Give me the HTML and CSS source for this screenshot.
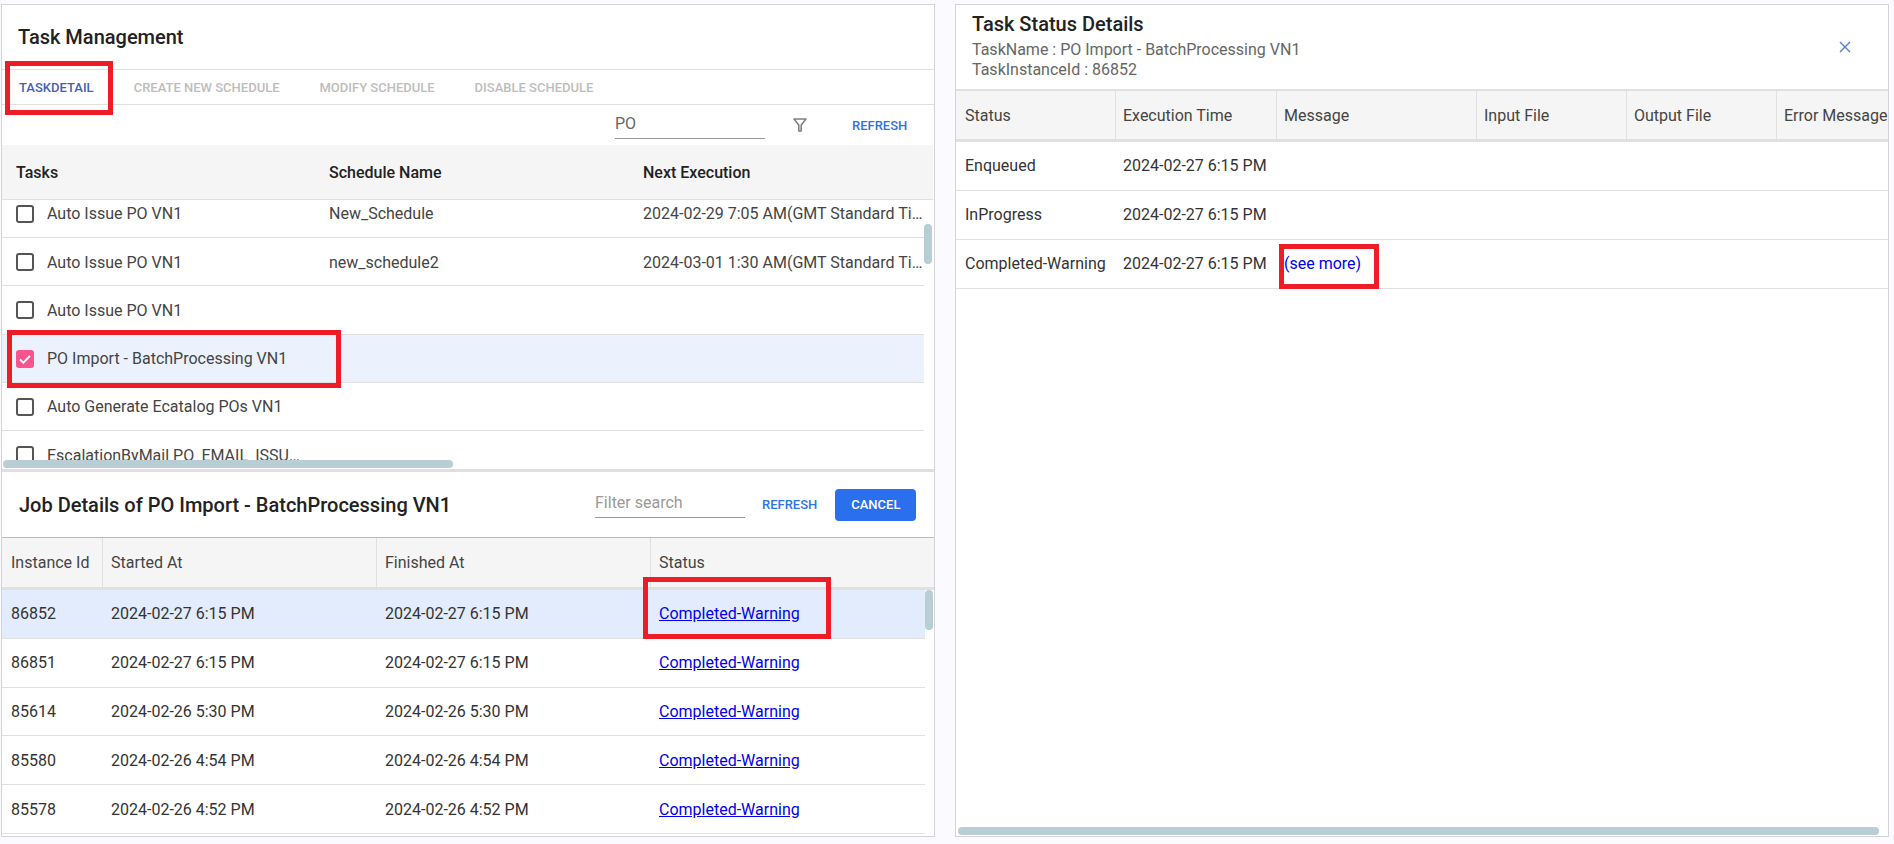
FILE: index.html
```html
<!DOCTYPE html>
<html lang="en">
<head>
    <meta charset="UTF-8">
    <meta name="viewport" content="width=device-width, initial-scale=1.0">
    <title>Task Management</title>
    <link rel="stylesheet" href="styles.css">
</head>
<body>
    <div class="page">
        <section class="panel left-panel">
            <div class="tasks-part">
                <h2 class="main-title">Task Management</h2>
                <nav class="tabs">
                    <a class="tab tab-first active">TASKDETAIL</a>
                    <a class="tab">CREATE NEW SCHEDULE</a>
                    <a class="tab">MODIFY SCHEDULE</a>
                    <a class="tab">DISABLE SCHEDULE</a>
                </nav>
                <div class="tools">
                    <div class="field field-po">PO</div>
                    <svg class="filter-icon" viewBox="0 0 14 14" width="14" height="14">
                        <path d="M1 1h12L8.2 7v6H5.8V7z" fill="none" stroke="#808080" stroke-width="1.6" stroke-linejoin="round"/>
                    </svg>
                    <a class="link-btn">REFRESH</a>
                </div>
                <div class="task-grid task-head">
                    <div>Tasks</div>
                    <div>Schedule Name</div>
                    <div>Next Execution</div>
                </div>
                <div class="task-list">
                    <div class="task-grid task-row first-row">
                        <div class="task-name"><span class="check"></span><span class="name">Auto Issue PO VN1</span></div>
                        <div>New_Schedule</div>
                        <div class="cut">2024-02-29 7:05 AM(GMT Standard Time)</div>
                    </div>
                    <div class="task-grid task-row">
                        <div class="task-name"><span class="check"></span><span class="name">Auto Issue PO VN1</span></div>
                        <div>new_schedule2</div>
                        <div class="cut">2024-03-01 1:30 AM(GMT Standard Time)</div>
                    </div>
                    <div class="task-grid task-row">
                        <div class="task-name"><span class="check"></span><span class="name">Auto Issue PO VN1</span></div>
                        <div></div>
                        <div></div>
                    </div>
                    <div class="task-grid task-row selected">
                        <div class="task-name">
                            <span class="check checked">
                                <svg viewBox="0 0 18 18" width="18" height="18"><path d="M4 9.5l3.4 3.2L14 5.8" fill="none" stroke="#fff" stroke-width="1.8"/></svg>
                            </span>
                            <span class="name">PO Import - BatchProcessing VN1</span>
                        </div>
                        <div></div>
                        <div></div>
                    </div>
                    <div class="task-grid task-row">
                        <div class="task-name"><span class="check"></span><span class="name">Auto Generate Ecatalog POs VN1</span></div>
                        <div></div>
                        <div></div>
                    </div>
                    <div class="task-grid task-row">
                        <div class="task-name"><span class="check"></span><span class="name">EscalationByMail PO_EMAIL_ISSUE VN1</span></div>
                        <div></div>
                        <div></div>
                    </div>
                    <div class="thumb thumb-h"></div>
                </div>
                <div class="thumb thumb-v tasks-thumb"></div>
            </div>

            <div class="jobs-part">
                <div class="job-bar">
                    <h2 class="job-title">Job Details of PO Import - BatchProcessing VN1</h2>
                    <div class="field field-search">Filter search</div>
                    <a class="link-btn">REFRESH</a>
                    <a class="cancel-btn">CANCEL</a>
                </div>
                <div class="job-grid job-head">
                    <div>Instance Id</div>
                    <div>Started At</div>
                    <div>Finished At</div>
                    <div>Status</div>
                </div>
                <div class="job-grid job-row current">
                    <div>86852</div>
                    <div>2024-02-27 6:15 PM</div>
                    <div>2024-02-27 6:15 PM</div>
                    <div><a class="status-link">Completed-Warning</a></div>
                </div>
                <div class="job-grid job-row">
                    <div>86851</div>
                    <div>2024-02-27 6:15 PM</div>
                    <div>2024-02-27 6:15 PM</div>
                    <div><a class="status-link">Completed-Warning</a></div>
                </div>
                <div class="job-grid job-row">
                    <div>85614</div>
                    <div>2024-02-26 5:30 PM</div>
                    <div>2024-02-26 5:30 PM</div>
                    <div><a class="status-link">Completed-Warning</a></div>
                </div>
                <div class="job-grid job-row">
                    <div>85580</div>
                    <div>2024-02-26 4:54 PM</div>
                    <div>2024-02-26 4:54 PM</div>
                    <div><a class="status-link">Completed-Warning</a></div>
                </div>
                <div class="job-grid job-row">
                    <div>85578</div>
                    <div>2024-02-26 4:52 PM</div>
                    <div>2024-02-26 4:52 PM</div>
                    <div><a class="status-link">Completed-Warning</a></div>
                </div>
                <div class="thumb thumb-v jobs-thumb"></div>
            </div>

            <div class="mark mark-tab"></div>
            <div class="mark mark-task"></div>
            <div class="mark mark-status"></div>
        </section>

        <section class="panel right-panel">
            <div class="detail-bar">
                <div>
                    <h2 class="detail-title">Task Status Details</h2>
                    <p class="detail-sub">TaskName : PO Import - BatchProcessing VN1</p>
                    <p class="detail-sub">TaskInstanceId : 86852</p>
                </div>
                <svg class="close-icon" viewBox="0 0 12 12" width="12" height="12">
                    <path d="M1 1l10 10M11 1L1 11" stroke="#4f7fd0" stroke-width="1.4"/>
                </svg>
            </div>
            <div class="detail-grid detail-head">
                <div>Status</div>
                <div>Execution Time</div>
                <div>Message</div>
                <div>Input File</div>
                <div>Output File</div>
                <div class="nowrap">Error Message</div>
            </div>
            <div class="detail-grid detail-row">
                <div>Enqueued</div>
                <div>2024-02-27 6:15 PM</div>
                <div></div><div></div><div></div><div></div>
            </div>
            <div class="detail-grid detail-row">
                <div>InProgress</div>
                <div>2024-02-27 6:15 PM</div>
                <div></div><div></div><div></div><div></div>
            </div>
            <div class="detail-grid detail-row">
                <div>Completed-Warning</div>
                <div>2024-02-27 6:15 PM</div>
                <div><a class="more-link">(see more)</a></div>
                <div></div><div></div><div></div>
            </div>
            <div class="thumb thumb-h detail-thumb"></div>
            <div class="mark mark-more"></div>
        </section>
    </div>
</body>
</html>
```

FILE: styles.css
```css
*{
    box-sizing: border-box;
    font-family: Roboto, "Liberation Sans", sans-serif;
}
body{
    margin: 0;
    background-color: #fbfbff;
    color: #333;
    font-size: 16px;
    height: 844px;
    overflow: hidden;
}
h2, p{
    margin: 0;
}
.page{
    display: flex;
    gap: 20px;
    padding: 4px 0 0 1px;
}
.panel{
    position: relative;
    background-color: white;
    border: 1px solid #d4d4d8;
    height: 833px;
}
.left-panel{
    width: 934px;
}
.right-panel{
    width: 934px;
}

/* top part */
.tasks-part{
    position: relative;
    height: 467px;
    border-bottom: 3px solid #e0e0e0;
}
.main-title{
    height: 64px;
    padding: 20px 0 0 16px;
    font-size: 20px;
    font-weight: 500;
    line-height: 24px;
    color: #222;
}
.tabs{
    display: flex;
    align-items: center;
    height: 36px;
    border-top: 1px solid #e0e0e0;
    border-bottom: 1px solid #e0e0e0;
    padding-left: 17px;
    gap: 40px;
    font-size: 13px;
    font-weight: 500;
    color: #bdbdbd;
}
.tab.active{
    color: #3f62b5;
}
.tools{
    display: flex;
    align-items: center;
    height: 40px;
    padding-left: 613px;
}
.field{
    width: 150px;
    height: 34px;
    border-bottom: 1px solid #999;
    color: #666;
    line-height: 22px;
}
.field-po{
    padding-top: 8px;
    margin-bottom: 6px;
}
.filter-icon{
    margin-left: 28px;
}
.link-btn{
    font-size: 13px;
    font-weight: 500;
    color: #2e72e8;
}
.tools .link-btn{
    margin-left: 45px;
}
.task-grid{
    display: grid;
    grid-template-columns: 326px 314px 282px;
    width: 922px;
}
.task-grid > div{
    padding-left: 14px;
    min-width: 0;
}
.task-grid > div + div{
    padding-left: 1px;
}
.task-head{
    height: 55px;
    align-items: center;
    background-color: #f5f5f5;
    border-bottom: 1px solid #e0e0e0;
    font-weight: 500;
    color: #222;
    width: 931px;
}
.task-list{
    position: relative;
    height: 269px;
    overflow: hidden;
}
.task-row{
    height: 48.25px;
    padding-top: 1px;
    align-items: center;
    border-bottom: 1px solid #e0e0e0;
    color: #444;
}
.first-row{
    margin-top: -10.25px;
}
.task-row.selected{
    background-color: #ebf2fd;
}
.task-name{
    display: flex;
    align-items: center;
    gap: 13px;
}
.name{
    max-width: 254px;
    white-space: nowrap;
    overflow: hidden;
    text-overflow: ellipsis;
}
.cut{
    white-space: nowrap;
    overflow: hidden;
    text-overflow: ellipsis;
}
.check{
    flex: none;
    width: 18px;
    height: 18px;
    border: 2px solid #555;
    border-radius: 3px;
}
.check.checked{
    border: none;
    background-color: #f8558f;
}
.check svg{
    display: block;
}

/* scrollbars */
.thumb{
    position: absolute;
    background-color: #b9cdd5;
    border-radius: 4px;
}
.thumb-h{
    height: 8px;
    left: 1px;
    width: 450px;
    bottom: 1px;
}
.thumb-v{
    width: 8px;
}
.tasks-thumb{
    right: 2px;
    top: 219px;
    height: 40px;
}
.jobs-thumb{
    right: 1px;
    top: 118px;
    height: 40px;
}
.detail-thumb{
    left: 2px;
    width: 921px;
}

/* job details */
.jobs-part{
    position: relative;
}
.job-bar{
    display: flex;
    align-items: center;
    height: 66px;
    border-bottom: 1px solid #bbb;
    padding-left: 17px;
}
.job-title{
    width: 576px;
    font-size: 20px;
    font-weight: 500;
    color: #222;
}
.field-search{
    color: #999;
    height: 32px;
    padding-top: 6px;
    margin-top: -6px;
}
.job-bar .link-btn{
    margin-left: 17px;
}
.cancel-btn{
    margin-left: 18px;
    width: 81px;
    height: 32px;
    line-height: 32px;
    text-align: center;
    background-color: #2a6fed;
    color: white;
    font-size: 13px;
    font-weight: 500;
    border-radius: 4px;
}
.job-grid{
    display: grid;
    grid-template-columns: 100px 274px 274px 275px;
    width: 923px;
}
.job-grid > div{
    padding-left: 9px;
    white-space: nowrap;
}
.job-head{
    width: 932px;
    grid-template-columns: 100px 274px 274px 284px;
    height: 52px;
    align-items: stretch;
    background-color: #f5f5f5;
    border-bottom: 3px solid #e0e0e0;
    color: #444;
}
.job-head > div{
    display: flex;
    align-items: center;
    padding-left: 8px;
    border-left: 1px solid #e0e0e0;
}
.job-head > div:first-child{
    padding-left: 9px;
    border-left: none;
}
.job-row{
    height: 48.8px;
    align-items: center;
    border-bottom: 1px solid #e0e0e0;
    color: #333;
}
.job-row.current{
    background-color: #e2ecfc;
}
.status-link, .more-link{
    color: #0000ee;
}
.status-link{
    text-decoration: underline;
}

/* right side */
.detail-bar{
    display: flex;
    align-items: flex-start;
    justify-content: space-between;
    height: 84px;
    padding: 7px 37px 0 16px;
}
.close-icon{
    margin-top: 29px;
}
.detail-title{
    margin-bottom: 4px;
    font-size: 20px;
    font-weight: 500;
    line-height: 24px;
    color: #222;
}
.detail-sub{
    color: #666;
    line-height: 20px;
}
.detail-grid{
    display: grid;
    grid-template-columns: 159px 161px 200px 150px 150px 112px;
}
.detail-grid > div{
    padding-left: 8px;
    min-width: 0;
}
.detail-grid > div:first-child{
    padding-left: 9px;
}
.detail-head{
    height: 53px;
    border-top: 2px solid #e0e0e0;
    border-bottom: 3px solid #e0e0e0;
    background-color: #f5f5f5;
    color: #444;
}
.detail-head > div{
    display: flex;
    align-items: center;
    padding-left: 7px;
    border-left: 1px solid #e0e0e0;
}
.detail-head > div:first-child{
    border-left: none;
}
.nowrap{
    white-space: nowrap;
    overflow: hidden;
}
.detail-row{
    height: 49px;
    padding-bottom: 2px;
    align-items: center;
    border-bottom: 1px solid #e0e0e0;
    white-space: nowrap;
    color: #333;
}

/* red annotation boxes */
.mark{
    position: absolute;
    border: 5px solid #ee1c25;
}
.mark-tab{
    left: 3px;
    top: 56px;
    width: 108px;
    height: 54px;
}
.mark-task{
    left: 5px;
    top: 325px;
    width: 334px;
    height: 58px;
}
.mark-status{
    left: 641px;
    top: 572px;
    width: 188px;
    height: 62px;
}
.mark-more{
    left: 323px;
    top: 239px;
    width: 100px;
    height: 45px;
}
```
